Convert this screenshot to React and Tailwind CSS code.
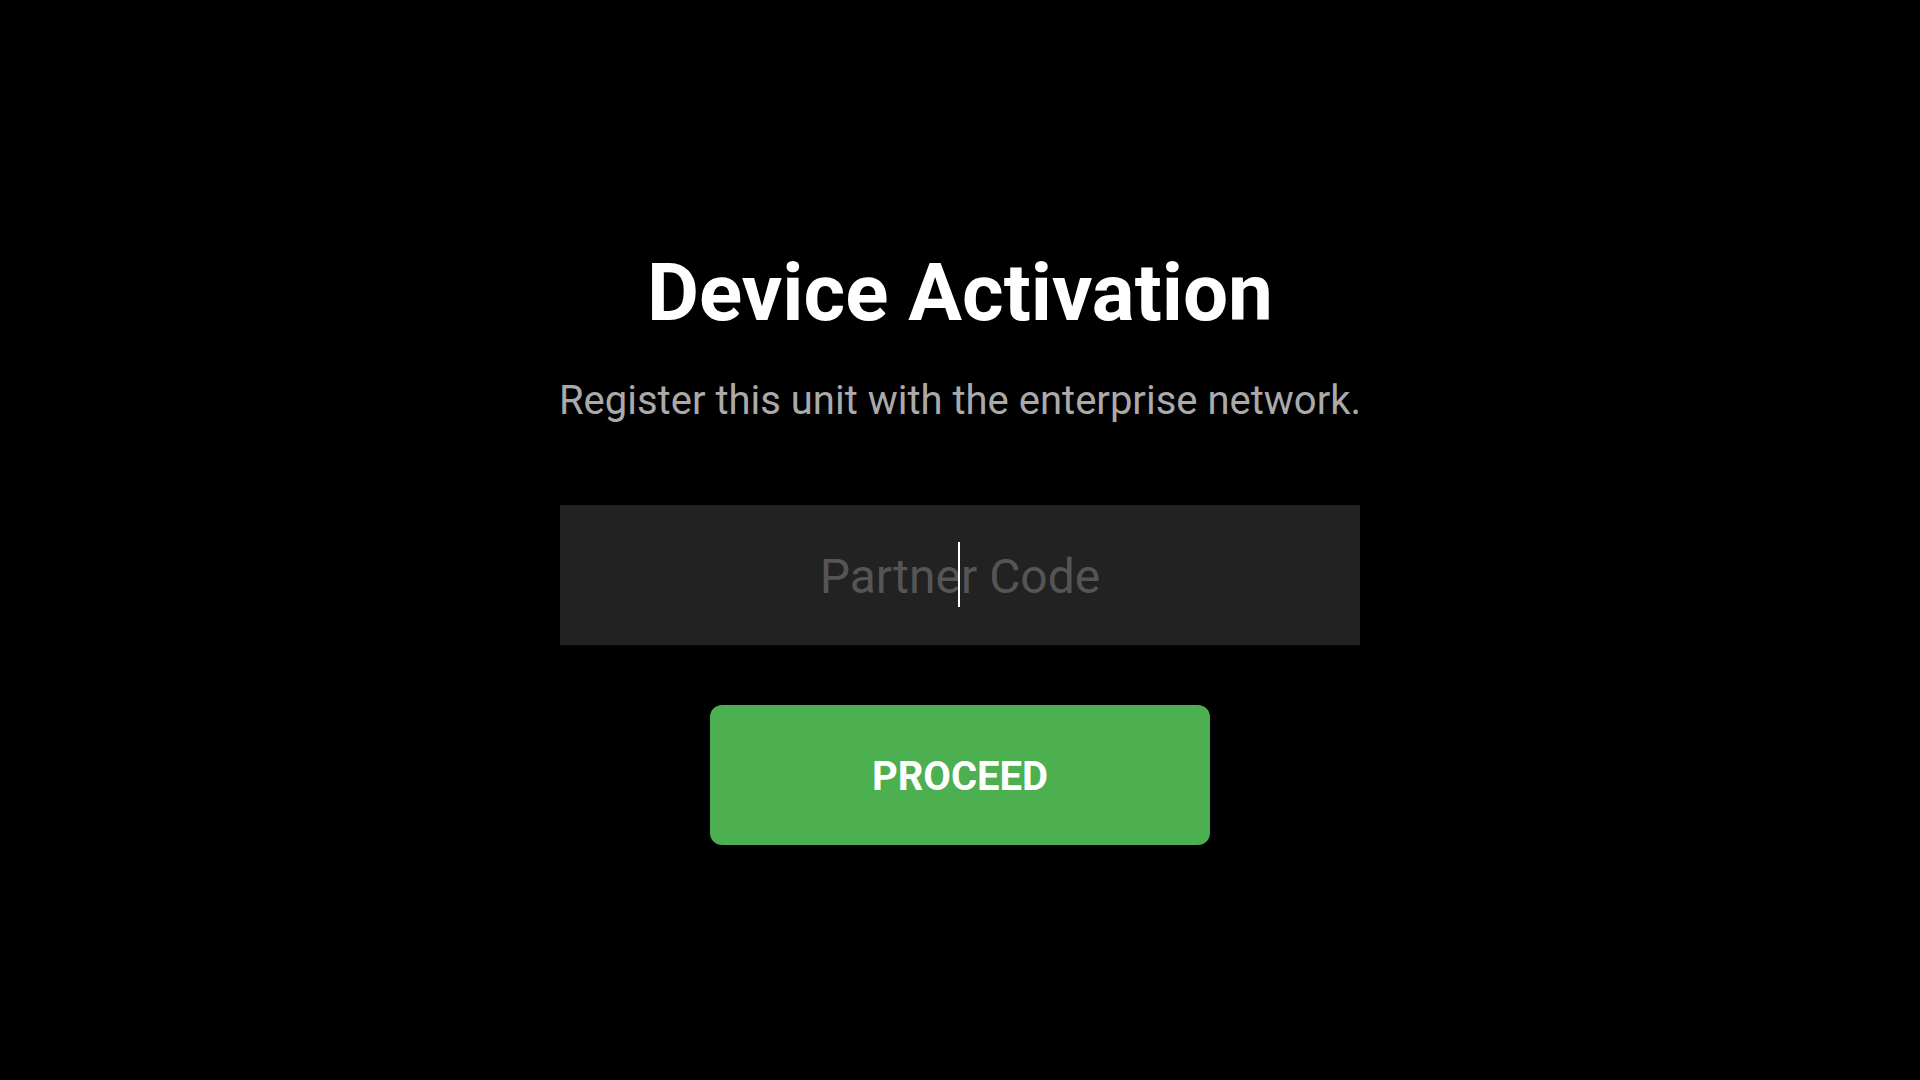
import React, { useState } from 'react';

const App = () => {
  const [code, setCode] = useState('');

  return (
    <div
      className="min-h-screen w-full bg-black flex flex-col items-center justify-center pt-[9px]"
      style={{ fontFamily: 'Roboto, "Noto Sans", sans-serif' }}
    >
      <h1 className="text-[80px] leading-[1.2] font-bold text-white">Device Activation</h1>
      <p className="mt-[36px] text-[40px] leading-[1.2] text-[#aaaaaa]">
        Register this unit with the enterprise network.
      </p>

      <div className="relative mt-[80px]">
        <input
          autoFocus
          value={code}
          onChange={(e) => setCode(e.target.value)}
          placeholder="Partner Code"
          className="w-[800px] h-[140px] pt-[3px] bg-[#222222] text-center text-[48px] text-white placeholder:text-[#555555] caret-white outline-none border-0"
        />
        {/* caret shown in the empty focused field */}
        {code === '' && (
          <span className="pointer-events-none absolute left-[398px] top-[37px] h-[65px] w-[2px] bg-white" />
        )}
      </div>

      <button className="mt-[60px] w-[500px] h-[140px] pt-[5px] rounded-xl bg-[#4caf50] text-white text-[40px] font-bold">
        PROCEED
      </button>
    </div>
  );
};

export default App;
